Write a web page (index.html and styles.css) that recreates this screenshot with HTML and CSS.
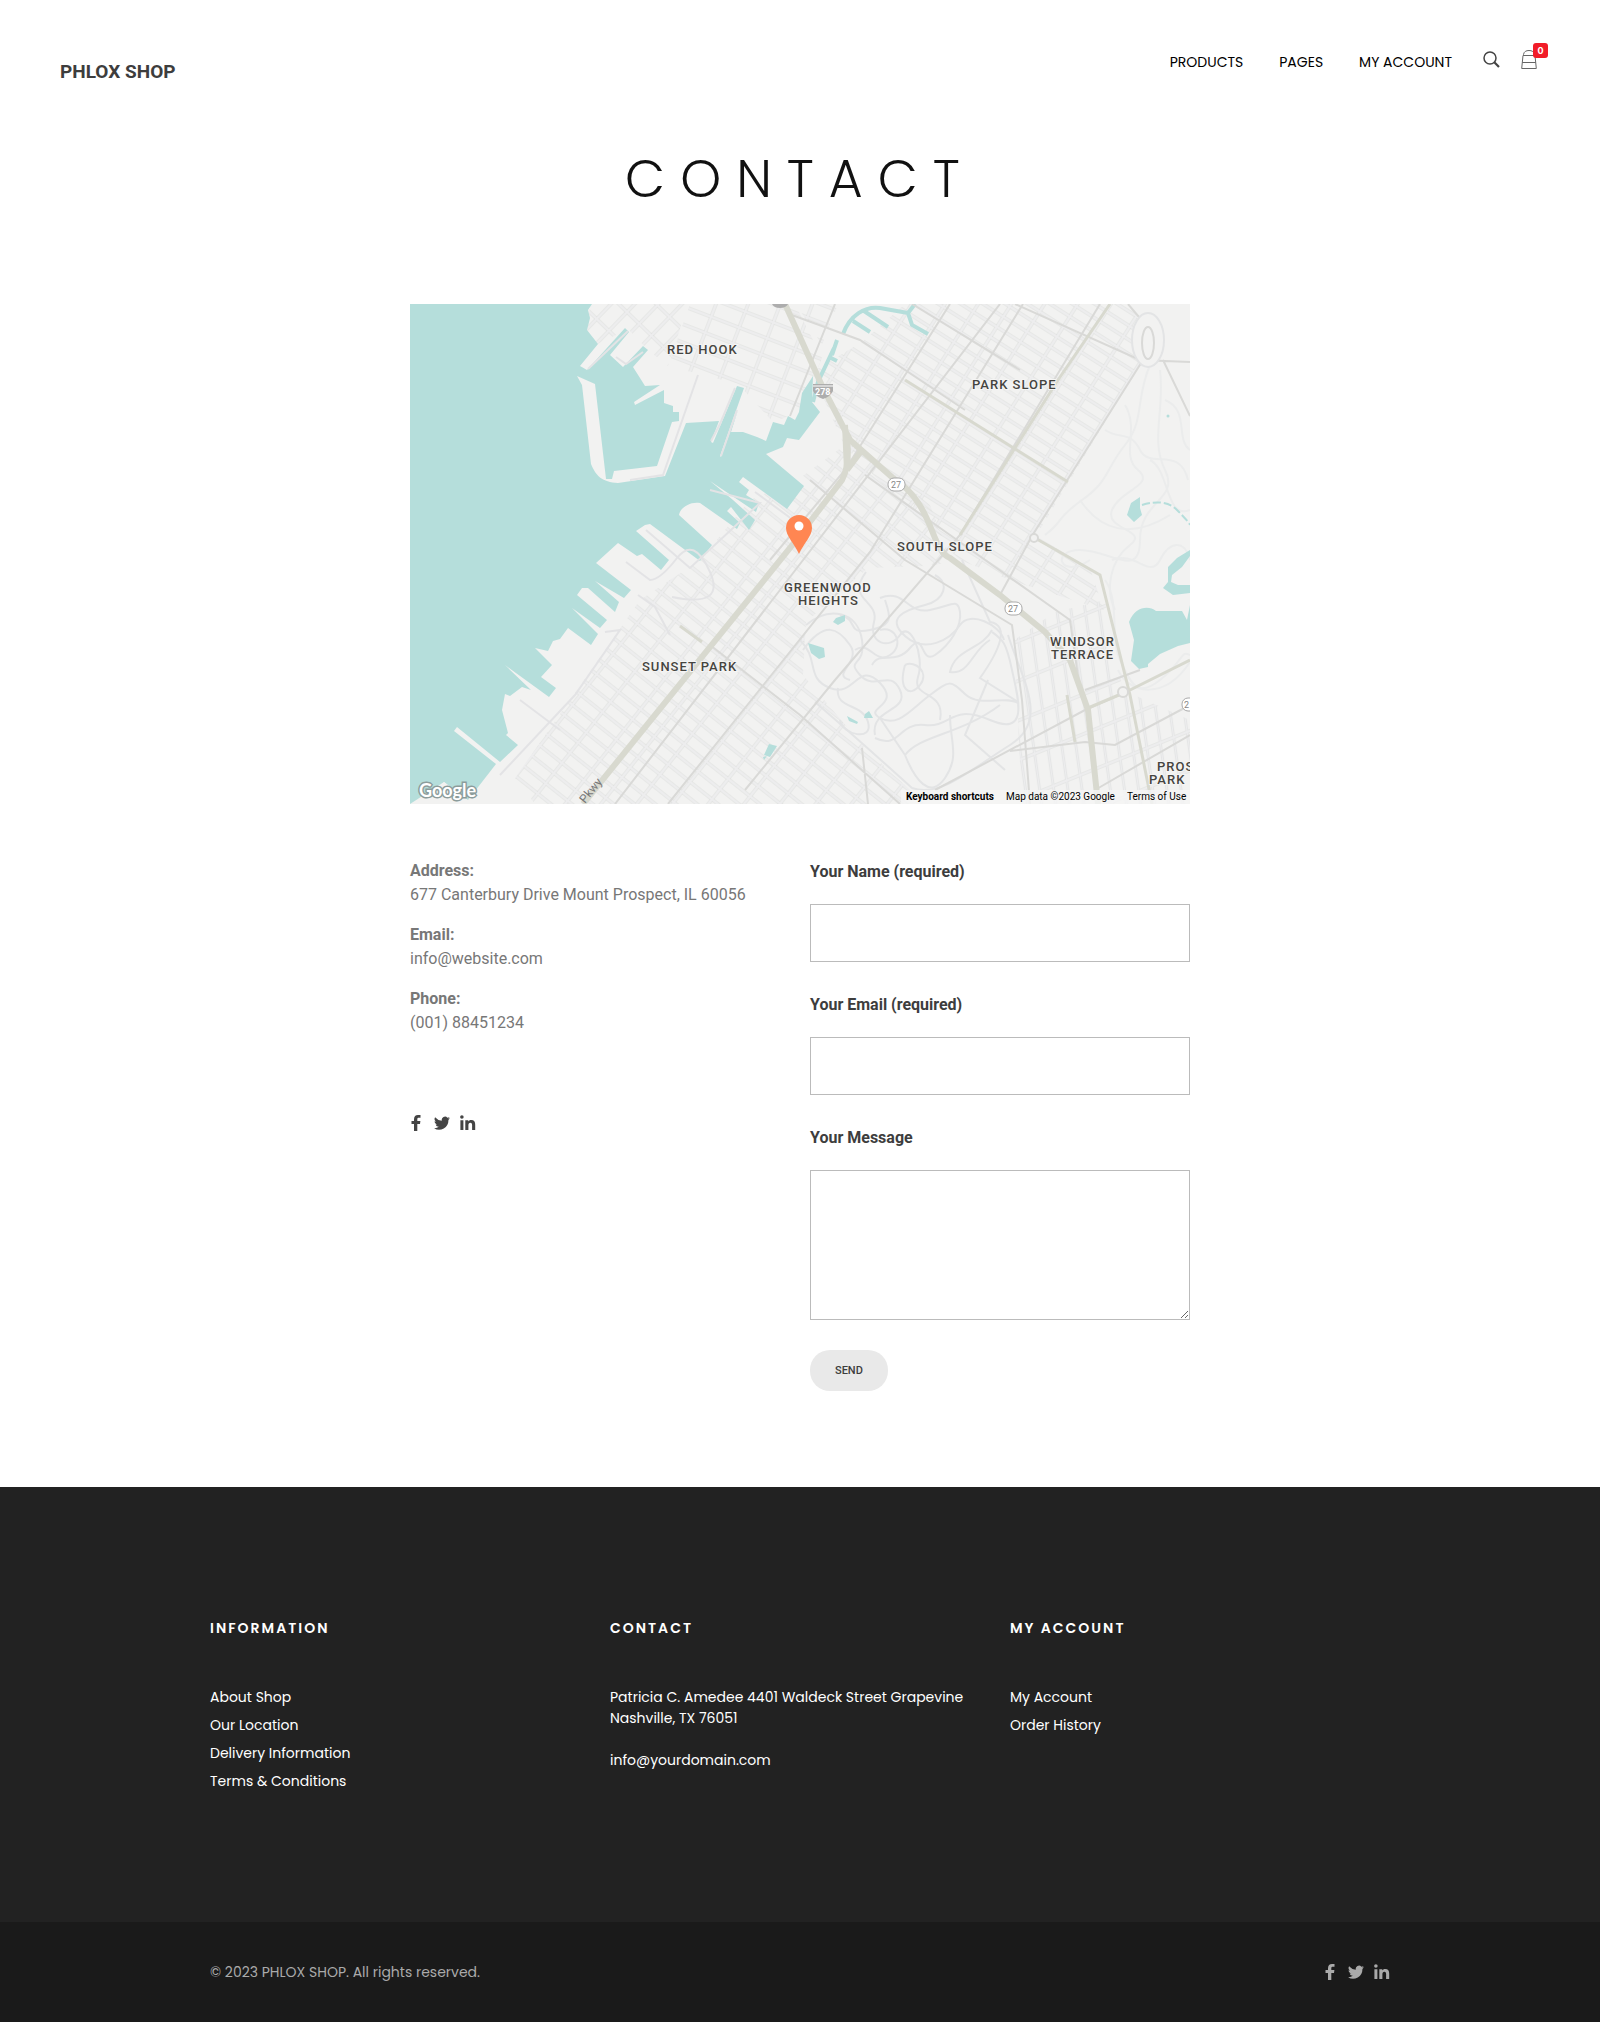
FILE: index.html
```html
<!DOCTYPE html>
<html lang="en">
<head>
<meta charset="utf-8">
<meta name="viewport" content="width=device-width, initial-scale=1">
<title>Contact – Phlox Shop</title>
<link rel="stylesheet" href="styles.css">
</head>
<body>
<svg class="sprite" aria-hidden="true">
  <symbol id="facebook" viewBox="2 0 14 16"><path d="M6 16V9H3.500V6H6V4.200C6 1.500 7.500 0 10 0H12.500V2.800H10.800C9.600 2.800 9.300 3.300 9.300 4.300V6H12.400L12 9H9.300V16Z"/></symbol>
  <symbol id="twitter" viewBox="0 0 16 16"><path d="M16 3.100c-.6.300-1.200.5-1.900.6.700-.4 1.200-1.100 1.400-1.800-.6.400-1.300.6-2.100.8A3.300 3.300 0 0 0 7.800 5.700 9.300 9.300 0 0 1 1.100 2.300a3.300 3.300 0 0 0 1 4.400c-.5 0-1-.2-1.500-.4 0 1.600 1.100 2.900 2.600 3.200-.5.100-1 .1-1.500 0 .4 1.300 1.600 2.300 3.100 2.300A6.600 6.600 0 0 1 0 13.200a9.300 9.300 0 0 0 14.400-8.300c.6-.5 1.200-1.100 1.600-1.800z"/></symbol>
  <symbol id="linkedin" viewBox="0 0 16 16"><circle cx="1.900" cy="2" r="1.800"/><path d="M.4 5.200h3V15h-3zM5.300 5.200h2.900v1.300c.6-1 1.600-1.500 3-1.500 3 0 4 1.800 4 4.700V15h-3.100v-4.900c0-1.500-.4-2.400-1.700-2.400-1.400 0-2 1-2 2.500V15H5.300z"/></symbol>
</svg>

<header class="site-header">
  <a class="brand" href="#">PHLOX SHOP</a>
  <nav class="site-nav" aria-label="Main">
    <a href="#">PRODUCTS</a>
    <a href="#">PAGES</a>
    <a href="#">MY ACCOUNT</a>
  </nav>
  <button class="icon-button search" type="button" aria-label="Search">
    <svg width="17" height="17" viewBox="0 0 17 17" fill="none" stroke="#444"><circle cx="7" cy="7" r="6" stroke-width="1.500"/><path d="M11.300 11.300L16 16" stroke-width="2.200"/></svg>
  </button>
  <a class="bag" href="#" aria-label="Shopping bag">
    <svg width="16" height="20" viewBox="0 0 16 20" fill="none" stroke="#666"><path d="M2.500 6V5.500C3 2.500 5.200 1.500 8 1.500s5 1 5.500 4V6M2 6.500h12L15.300 19.500H.7ZM1.300 13.500h13.400"/></svg>
    <span class="badge">0</span>
  </a>
</header>

<main class="content">
  <h1>CONTACT</h1>

  <svg class="map" viewBox="410 304 780 500" role="img" aria-label="Map of Greenwood Heights, Brooklyn">
    <defs>
      <pattern id="grid-sunset" width="13" height="28" patternUnits="userSpaceOnUse" patternTransform="translate(583 804) rotate(-51.500)">
        <path class="casing" d="M6 0V28M0 14H13"/><path class="street" d="M6 0V28M0 14H13"/>
      </pattern>
      <pattern id="grid-slope" width="12" height="28" patternUnits="userSpaceOnUse" patternTransform="translate(870 552) rotate(-57.500)">
        <path class="casing" d="M6 0V28M0 14H12"/><path class="street" d="M6 0V28M0 14H12"/>
      </pattern>
      <pattern id="grid-hook" width="30" height="17" patternUnits="userSpaceOnUse" patternTransform="translate(700 304) rotate(21)">
        <path class="casing" d="M15 0V17M0 8H30"/><path class="street" d="M15 0V17M0 8H30"/>
      </pattern>
      <pattern id="grid-pier" width="26" height="17" patternUnits="userSpaceOnUse" patternTransform="translate(600 304) rotate(-46)">
        <path class="casing" d="M13 0V17M0 8H26"/><path class="street" d="M13 0V17M0 8H26"/>
      </pattern>
      <pattern id="grid-kensington" width="14" height="38" patternUnits="userSpaceOnUse" patternTransform="translate(1020 700) rotate(-8) skewY(-14)">
        <path class="casing" d="M7 0V38M0 19H14"/><path class="street" d="M7 0V38M0 19H14"/>
      </pattern>
    </defs>
    <rect class="land" x="410" y="304" width="780" height="500"/>

    <g>
      <path fill="url(#grid-pier)" d="M590 304H688L668 366 648 350 628 329 598 344 587 330Z"/>
      <path fill="url(#grid-hook)" d="M690 304H795L822 358 800 412 773 422 738 384 668 366Z"/>
      <path fill="url(#grid-hook)" d="M796 304H838L822 345Z"/>
      <path fill="url(#grid-slope)" d="M862 342L905 304H1135L1143 360 1036 536 1090 568 1104 610 1010 580 960 560 845 447 812 372Z"/>
      <path fill="url(#grid-sunset)" d="M845 445L890 470 930 505 952 562 926 566 868 568 806 622 803 675 865 748 925 804H535L515 778 598 660 640 600 700 560 750 500 800 478Z"/>
      <path fill="url(#grid-kensington)" d="M1014 640L1055 612 1105 600 1123 690 1190 720V804H1022Z"/>
    </g>

    <!-- Green-Wood Cemetery paths -->
    <g class="paths">
      <path d="M806 625C830 605 858 612 862 640S845 658 860 675 890 668 900 690 870 708 875 735"/>
      <path d="M866 572C845 600 880 600 874 622S890 650 900 635 925 655 918 677 946 690 940 720"/>
      <path d="M935 575C950 583 945 600 925 605S885 618 905 636 950 640 960 625 1000 625 1004 640"/>
      <path d="M880 598C905 588 907 615 930 610S958 598 960 612 950 645 935 655 925 630 910 648 880 650 872 665"/>
      <path d="M962 560L990 622C1010 625 1000 650 980 678L1018 702M992 630C982 650 955 648 950 672 970 675 972 650 990 640"/>
      <path d="M800 640C820 660 805 678 830 688S858 660 880 683 862 708 880 718 910 710 930 695 950 680 965 694 1005 695 1018 703"/>
      <path d="M803 650C825 620 838 628 850 645S830 675 850 680M838 688C835 710 862 702 868 722S842 735 840 720"/>
      <path d="M875 738C900 750 898 722 925 725S950 703 990 720 1018 698 1012 670 1003 640 992 632"/>
      <path d="M905 755C920 735 960 735 1000 705M905 755C915 780 930 800 945 778S950 742 950 715M880 718L905 755M988 680L965 735 1005 770"/>
      <path d="M815 702C845 728 870 750 912 788C940 798 970 770 1010 745S1022 680 1008 635"/>
      <path d="M840 615C860 620 845 635 870 630S890 615 885 600M855 650C870 640 875 665 890 655S895 625 880 630M905 665C915 660 930 672 920 685S898 690 905 665"/>
    </g>
    <!-- Prospect Park paths -->
    <g class="paths faint">
      <path d="M1150 365C1135 400 1145 420 1125 445S1110 480 1082 500 1065 520 1045 535"/>
      <path d="M1160 370C1165 410 1150 440 1165 470S1140 500 1140 540 1110 550 1080 550 1060 580 1090 560"/>
      <path d="M1125 405C1140 430 1120 455 1138 470S1120 490 1112 510 1150 530 1130 545 1105 590 1115 610"/>
      <path d="M1105 430C1120 440 1130 430 1140 450S1180 445 1188 480M1165 400C1190 410 1175 440 1190 450M1150 460C1170 470 1165 520 1190 510"/>
      <path d="M1105 580C1120 600 1110 640 1120 660S1135 700 1160 680 1180 650 1190 655M1080 500C1100 530 1130 540 1170 515"/>
      <path d="M1112 560C1135 550 1150 580 1160 560S1185 540 1190 560M1118 670C1130 695 1165 700 1190 662"/>
    </g>

    <g class="water">
      <path d="M410 304H592L588 310 590 318 587 330 598 344 580 366 587 370 625 328 629 332 610 355 623 367 643 346 648 350 633 367 640 378 645 386 660 385 634 402 635 405 664 390 664 403 673 406 673 412 679 412V421L672 422 657 466 614 471 612 479H606L595 384 577 376 582 385 591 464C596 476 602 482 618 483L665 476 686 423 719 421 711 442 713 443 724 417 737 386 744 388 720 456 721 457 738 410 731 432 743 432 757 437 766 441 773 422 784 425 788 416 795 420 799 412 802 393 813 376 812 402 820 412 811 424 799 440 787 438 783 447 766 454 804 486 787 509 743 477 739 482 749 490 746 495 759 503 756 512 710 481 733 500 755 520 749 530 731 507 727 511 740 523 737 529 700 503C690 501 680 508 679 515L712 545 700 561 650 524 645 525 636 531 669 560 661 570 642 554 637 556 618 543 596 563 631 590 624 598 595 581 619 602 615 612 588 588H582L577 595 607 620 600 628 572 608 598 634 591 645 568 628 560 639 553 641 548 651 535 648 552 665 541 677 556 688 549 697 505 665 531 690 522 687 510 696 505 694 502 710 508 733 506 735 518 745 500 762 457 727 454 731 496 764 468 800 444 782 425 804H410Z"/>
      <path d="M1129 622C1135 607 1148 605 1156 611H1182L1187 620 1190 605V643L1178 646 1160 654 1148 664V667L1139 669 1131 661 1134 640Z"/>
      <path d="M1190 550L1177 558 1168 567V582L1163 588 1173 595 1190 593V585H1178L1171 582 1172 575 1182 567 1190 556Z"/>
      <path d="M1131 503L1140 497V508L1142 515 1134 522 1127 515ZM836 618L845 615 845 621 838 625 833 622ZM808 643L824 648 825 657 819 659 811 653ZM865 714L869 711 873 718 864 718ZM847 716L858 722 857 724 849 721ZM764 755L769 744 777 746 770 757ZM763 757L767 756 764 760Z"/>
      <circle cx="1168" cy="416" r="1.500"/>
    </g>
    <g class="canal">
      <path d="M813 402L818 382 834 348M832 355L837 340M843 334C850 315 865 306 880 308L908 313 912 325 928 334M908 313L915 304M853 321L870 332M864 311L888 327M829 357L837 361"/>
      <path class="thin" d="M1142 505Q1165 498 1177 510T1190 525"/>
    </g>
    <path class="land" d="M410 804L444 782 466 800 462 804Z"/>
    <g class="pier-road"><path d="M628 331L588 369M643 352L626 364 616 357M630 480L663 475 698 375M735 388L720 424 711 441M737 410L721 456M755 492L800 525M646 530L690 568 760 503 710 490M626 562L650 580Q660 580 677 558T710 572 672 597M638 595L655 607 670 635M520 700L560 730M605 632L620 630 575 695 500 775"/></g>

    <g class="avenues">
      <path d="M615 804L780 590 1000 304M835 304L790 416M950 304L845 470 770 560M1023 304L870 552 668 804M1100 304L960 535 835 680 745 790M1143 360L1032 536 1000 595M710 645L800 715 900 804M792 315L860 340 965 410M912 304L1020 370M1015 304L1140 360 1190 362M810 480L905 560 1012 625 1022 700 1030 804M865 475L950 535 1070 620 1080 690M1163 360L1190 416M1128 304L1150 330 1140 360M862 748L868 804"/>
      <path d="M935 790L1085 710 1126 692M1010 751L1085 742 1115 745 1190 705M1085 690L1140 670M1095 790L1190 735"/>
    </g>
    <g class="shore-road"><path d="M905 380L1068 482M1110 304L1058 380 960 535M1035 538L1100 575 1130 695 1152 804M1126 692L1190 660M1126 692L1088 708M1085 710M680 626L702 642M1067 695L1075 742"/></g>
    <g class="highways">
      <path class="parkway" d="M583 804L790 548 842 480Q850 465 847 440"/>
      <path class="parkway" d="M785 304L823 388 850 440 893 478C935 505 930 550 950 558L1000 595 1045 632 1070 660 1088 710 1098 804"/>
      <path class="parkway" d="M845 425L847 470M847 470L862 450"/>
    </g>
    <g class="circles"><circle cx="1034" cy="538" r="4"/><circle cx="1123" cy="692" r="5"/><ellipse class="faint-ring" cx="1148" cy="340" rx="16" ry="27"/><ellipse cx="1148" cy="343" rx="6" ry="16"/></g>

    <g class="shields">
      <path class="interstate" d="M813 384H833V391Q831 396 823 399 815 396 813 391Z"/><path class="interstate-bar" d="M813 386H833"/>
      <text class="interstate-number" x="815" y="395">278</text>
      <path class="interstate" d="M772 304H788Q786 308 780 308 774 308 772 304Z"/>
      <rect x="888" y="478" width="17" height="13" rx="6"/><text x="891" y="488">27</text>
      <rect x="1005" y="602" width="17" height="13" rx="6"/><text x="1008" y="612">27</text>
      <rect x="1182" y="698" width="17" height="13" rx="6"/><text x="1184" y="708">2</text>
    </g>

    <g class="places">
      <text x="667" y="354">RED HOOK</text>
      <text x="972" y="389">PARK SLOPE</text>
      <text x="897" y="551">SOUTH SLOPE</text>
      <text x="784" y="592">GREENWOOD</text>
      <text x="798" y="605">HEIGHTS</text>
      <text x="1050" y="646">WINDSOR</text>
      <text x="1051" y="659">TERRACE</text>
      <text x="642" y="671">SUNSET PARK</text>
      <text x="1157" y="771">PROS</text>
      <text x="1149" y="784">PARK</text>
    </g>
    <text class="road-name" transform="translate(585 804) rotate(-51)">Pkwy</text>

    <path class="pin" d="M799 554C794 543 786 536 786 528A13 13 0 0 1 812 528C812 536 804 543 799 554Z"/>
    <circle cx="799" cy="526" r="4.500" fill="#fff"/>

    <text class="google" x="419" y="797">Google</text>
    <rect x="901" y="790" width="289" height="14" fill="#f5f5f5" fill-opacity=".8"/>
    <g class="legal">
      <text class="strong" x="906" y="800">Keyboard shortcuts</text>
      <text x="1006" y="800">Map data ©2023 Google</text>
      <text x="1127" y="800">Terms of Use</text>
    </g>
  </svg>

  <div class="columns">
    <section class="details">
      <p><strong>Address:</strong><br>677 Canterbury Drive Mount Prospect, IL 60056</p>
      <p><strong>Email:</strong><br>info@website.com</p>
      <p><strong>Phone:</strong><br>(001) 88451234</p>
      <div class="social">
        <a href="#" aria-label="Facebook"><svg class="narrow"><use href="#facebook"/></svg></a>
        <a href="#" aria-label="Twitter"><svg><use href="#twitter"/></svg></a>
        <a href="#" aria-label="LinkedIn"><svg><use href="#linkedin"/></svg></a>
      </div>
    </section>
    <form class="contact-form">
      <label for="name">Your Name (required)</label>
      <input id="name" type="text" required>
      <label for="email">Your Email (required)</label>
      <input id="email" type="email" required>
      <label for="message">Your Message</label>
      <textarea id="message"></textarea>
      <button class="send" type="submit">SEND</button>
    </form>
  </div>
</main>

<footer>
  <div class="footer-main">
    <div class="footer-columns">
      <section>
        <h2>INFORMATION</h2>
        <ul>
          <li><a href="#">About Shop</a></li>
          <li><a href="#">Our Location</a></li>
          <li><a href="#">Delivery Information</a></li>
          <li><a href="#">Terms &amp; Conditions</a></li>
        </ul>
      </section>
      <section>
        <h2>CONTACT</h2>
        <address>Patricia C. Amedee 4401 Waldeck Street Grapevine<br>Nashville, TX 76051<br><br>info@yourdomain.com</address>
      </section>
      <section>
        <h2>MY ACCOUNT</h2>
        <ul>
          <li><a href="#">My Account</a></li>
          <li><a href="#">Order History</a></li>
        </ul>
      </section>
    </div>
  </div>
  <div class="footer-bottom">
    <div class="footer-bar">
      <p>© 2023 PHLOX SHOP. All rights reserved.</p>
      <div class="social">
        <a href="#" aria-label="Facebook"><svg class="narrow"><use href="#facebook"/></svg></a>
        <a href="#" aria-label="Twitter"><svg><use href="#twitter"/></svg></a>
        <a href="#" aria-label="LinkedIn"><svg><use href="#linkedin"/></svg></a>
      </div>
    </div>
  </div>
</footer>
</body>
</html>
```
FILE: styles.css
```css
* { box-sizing: border-box; }

body {
  margin: 0;
  background: #fff;
  color: #777;
  font: 16px/24px Roboto, "Liberation Sans", sans-serif;
}

a { color: inherit; text-decoration: none; }
h1, h2, p, ul { margin: 0; padding: 0; }
ul { list-style: none; }
.sprite { position: absolute; width: 0; height: 0; }

/* Header */
.site-header {
  display: flex;
  align-items: center;
  height: 118px;
  padding: 0 63px 0 60px;
}
.brand {
  margin-right: auto;
  padding-top: 26px;
  color: #3d3d3d;
  font-size: 19px;
  font-weight: 700;
}
.site-nav {
  display: flex;
  gap: 36px;
  padding-top: 6px;
  color: #000;
  font-family: Poppins, Inter, sans-serif;
  font-size: 14px;
}
.icon-button {
  display: flex;
  margin-left: 31px;
  padding: 0;
  border: 0;
  background: none;
}
.bag { position: relative; display: flex; margin-left: 21px; }
.badge {
  position: absolute;
  top: -6px;
  left: 12px;
  width: 15px;
  height: 15px;
  border-radius: 3px;
  background: #f11c28;
  color: #fff;
  font: 700 9px/15px Inter, sans-serif;
  text-align: center;
}

/* Contact content */
.content { max-width: 780px; margin: 0 auto; padding-bottom: 96px; }
h1 {
  padding: 24px 0 88px;
  color: #111;
  font: 300 52px/74px Poppins, Inter, sans-serif;
  letter-spacing: 15px;
  text-align: center;
}
.map { display: block; width: 100%; }
.columns {
  display: grid;
  grid-template-columns: 1fr 1fr;
  gap: 20px;
  padding-top: 54px;
}
.details { padding-top: 1px; }
.details p { margin-bottom: 16px; }
.social { display: flex; gap: 10px; }
.social a { display: flex; }
.social svg { width: 16px; height: 16px; fill: currentColor; }
.social .narrow { width: 14px; }
.details .social { padding-top: 64px; color: #444; }
.contact-form {
  display: flex;
  flex-direction: column;
  align-items: flex-start;
}
.contact-form label {
  padding: 2px 0 20px;
  color: #3d3d3d;
  font-weight: 700;
}
.contact-form input,
.contact-form textarea {
  width: 100%;
  margin-bottom: 29px;
  padding: 12px;
  border: 1px solid #bbb;
  background: #fff;
  font: inherit;
}
.contact-form input { height: 58px; }
.contact-form textarea { height: 150px; margin-bottom: 30px; }
.send {
  padding: 0 25px;
  border: 0;
  border-radius: 20px;
  background: #e9e9e9;
  color: #3d3d3d;
  font: 500 11px/41px Roboto, sans-serif;
}

/* Footer */
footer {
  background: #222;
  color: #fff;
  font: 14px/21px Poppins, Inter, sans-serif;
}
.footer-columns {
  display: grid;
  grid-template-columns: repeat(3, 1fr);
  gap: 20px;
  max-width: 1180px;
  min-height: 435px;
  margin: 0 auto;
  padding-top: 131px;
}
.footer-columns h2 {
  margin-bottom: 48px;
  font-size: 14px;
  line-height: 21px;
  font-weight: 600;
  letter-spacing: 2px;
}
.footer-columns li { margin-bottom: 7px; }
.footer-columns address { font-style: normal; }
.footer-bottom { background: #1a1a1a; }
.footer-bar {
  display: flex;
  align-items: center;
  justify-content: space-between;
  max-width: 1180px;
  min-height: 100px;
  margin: 0 auto;
  color: #aaa;
}

/* Map drawing */
.land { fill: #f2f2f1; }
.casing { fill: none; stroke: #dcdddc; stroke-width: 3; }
.street { fill: none; stroke: #ededee; stroke-width: 2; }
.water { fill: #b5dedb; }
.canal { fill: none; stroke: #b5dedb; stroke-width: 4; }
.canal .thin { stroke-width: 2; stroke-dasharray: 8 3; }
.paths { fill: none; stroke: #e3e4e5; stroke-width: 2; }
.paths.faint { stroke: #ebecec; }
.pier-road { fill: none; stroke: #e3e3e5; stroke-width: 2; }
.avenues { fill: none; stroke: #d9d9d7; stroke-width: 2; }
.shore-road { fill: none; stroke: #d8d9cf; stroke-width: 3; }
.parkway { fill: none; stroke: #d8d9cf; stroke-width: 6; }
.circles { fill: #f2f2f1; stroke: #d9d9d7; stroke-width: 2; }
.circles .faint-ring { stroke: #e3e4e5; }
.shields rect { fill: #fff; stroke: #aaa; }
.shields text { fill: #888; font: 9px Roboto, sans-serif; }
.interstate { fill: #adadad; }
.interstate-bar { stroke: #fff; }
.shields .interstate-number { fill: #fff; font-weight: 700; }
.places {
  fill: #45443f;
  stroke: #f5f5f4;
  stroke-width: 2px;
  paint-order: stroke;
  font: 500 13px Roboto, sans-serif;
  letter-spacing: 1px;
}
.road-name { fill: #777; font: 12px Roboto, sans-serif; }
.pin { fill: #ff8652; }
.google {
  fill: #fff;
  stroke: #8c9c9b;
  stroke-width: 3px;
  paint-order: stroke;
  font: 700 18px Lato, sans-serif;
}
.legal { fill: #000; font: 10px Roboto, sans-serif; }
.legal .strong { font-weight: 700; }

@media (max-width: 1220px) {
  .content, .footer-columns, .footer-bar { margin-inline: 20px; }
}
```
